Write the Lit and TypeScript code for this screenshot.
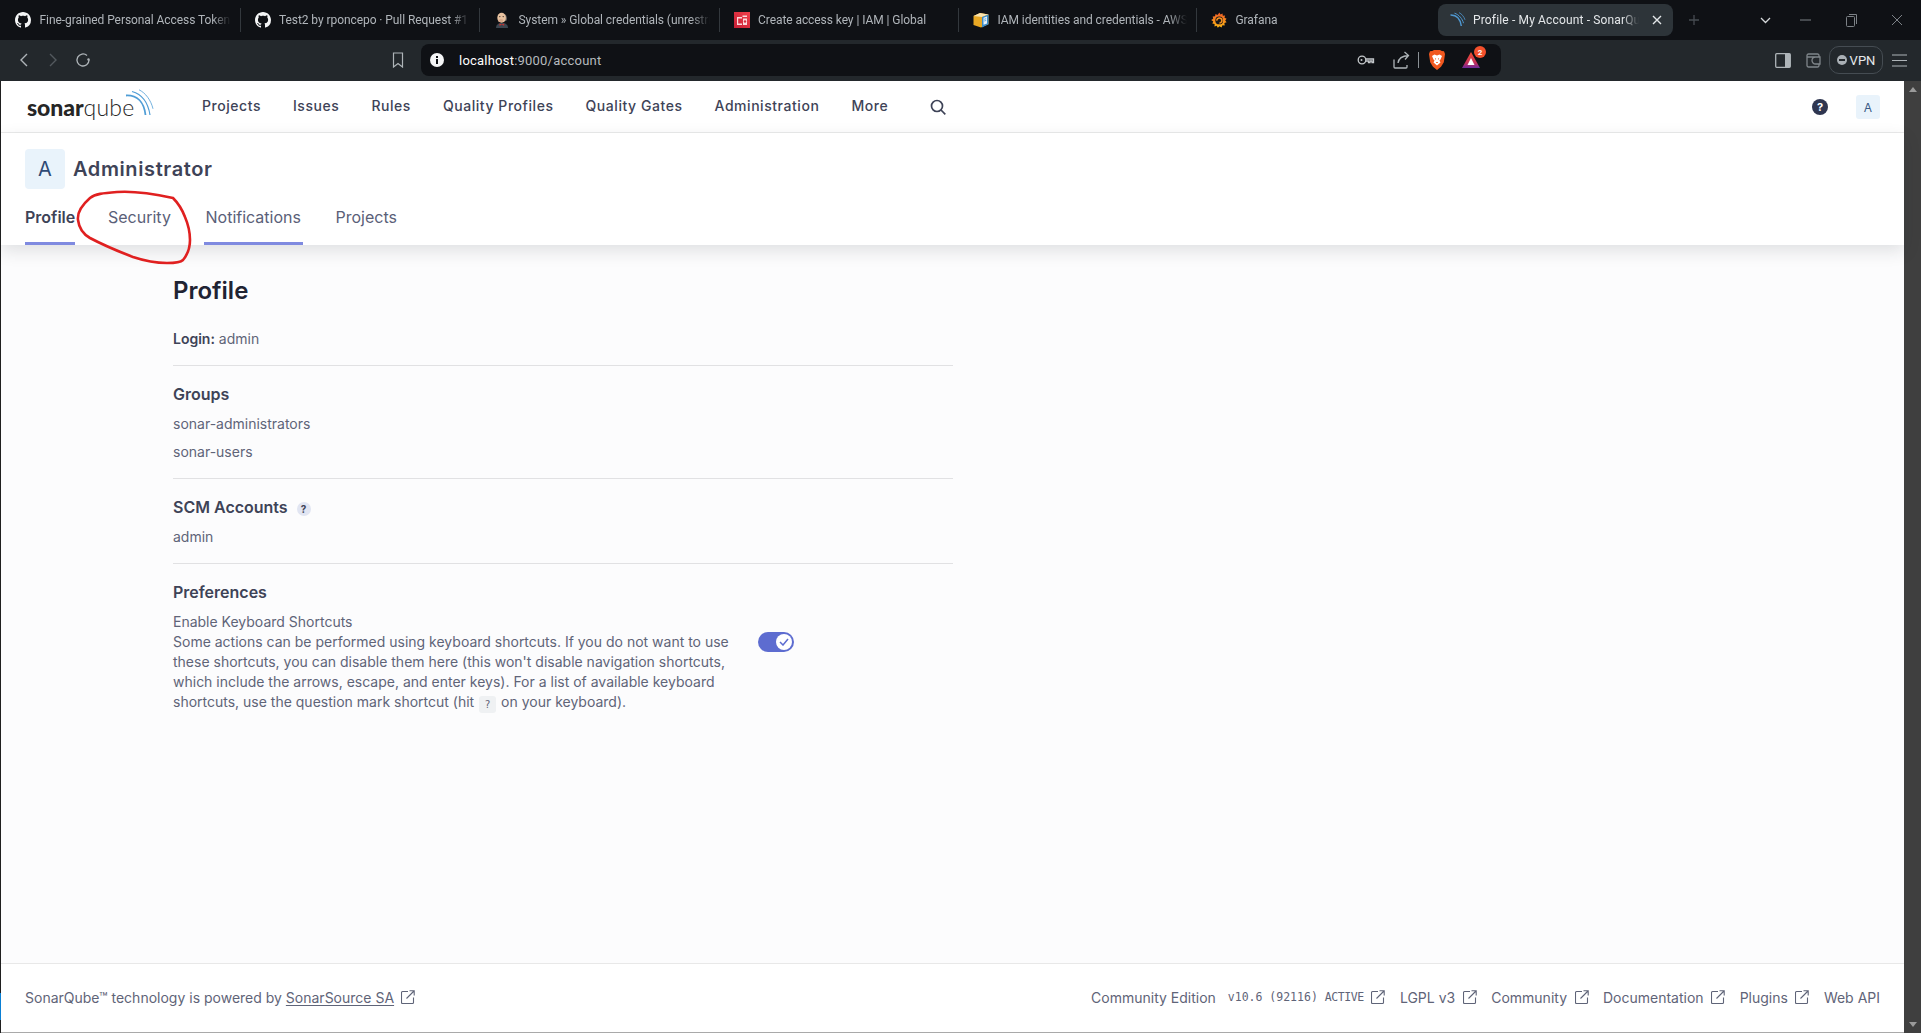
import { LitElement, html, css } from "lit";
import { customElement } from "lit/decorators.js";

const GH = "M8 0C3.58 0 0 3.58 0 8c0 3.54 2.29 6.53 5.47 7.59.4.07.55-.17.55-.38 0-.19-.01-.82-.01-1.49-2.01.37-2.53-.49-2.69-.94-.09-.23-.48-.94-.82-1.13-.28-.15-.68-.52-.01-.53.63-.01 1.08.58 1.23.82.72 1.21 1.87.87 2.33.66.07-.52.28-.87.51-1.07-1.78-.2-3.64-.89-3.64-3.95 0-.87.31-1.59.82-2.15-.08-.2-.36-1.02.08-2.12 0 0 .67-.21 2.2.82.64-.18 1.32-.27 2-.27s1.36.09 2 .27c1.53-1.04 2.2-.82 2.2-.82.44 1.1.16 1.92.08 2.12.51.56.82 1.27.82 2.15 0 3.07-1.87 3.75-3.65 3.95.29.25.54.73.54 1.48 0 1.07-.01 1.93-.01 2.2 0 .21.15.46.55.38A8.01 8.01 0 0 0 16 8c0-4.42-3.58-8-8-8z";

const github = html`<svg class="fav" viewBox="0 0 16 16"><path fill="#f4f5f6" d=${GH}></path></svg>`;
const jenkins = html`<svg class="fav" viewBox="0 0 16 16">
  <path d="M2 16c0-3 2-5 6-5s6 2 6 5z" fill="#3c4650"></path>
  <path d="M10.800 2.200c2 1 2.600 4 1.800 6.400l-1.800.6z" fill="#6f6a66"></path>
  <ellipse cx="7.600" cy="5.700" rx="4.300" ry="5" fill="#e9c3a0"></ellipse>
  <ellipse cx="6.800" cy="8.400" rx="2.600" ry="1.500" fill="#d9a98a"></ellipse>
  <circle cx="5.800" cy="4.600" r=".7" fill="#3a2f2a"></circle>
  <circle cx="9.200" cy="4.600" r=".7" fill="#3a2f2a"></circle>
  <path d="M5.400 11.400l2.400 1 2.400-1v2.400l-2.400-1-2.400 1z" fill="#c8322e"></path>
</svg>`;
const awsRed = html`<svg class="fav" viewBox="0 0 16 16">
  <defs><linearGradient id="ar" x1="0" y1="1" x2="1" y2="0"><stop offset="0" stop-color="#c51f35"></stop><stop offset="1" stop-color="#f2404b"></stop></linearGradient></defs>
  <rect width="16" height="16" fill="url(#ar)"></rect>
  <path d="M3 5h5v1.500H4.200v5H8V13H3zM8.500 3.500H13V5H8.500zM9 6.500h4V13H9z" fill="#fbd9dc"></path>
  <circle cx="11" cy="9.500" r="1.200" fill="#d42d3e"></circle>
</svg>`;
const iam = html`<svg class="fav" viewBox="0 0 16 16">
  <path d="M.5 4L7 1l8.500 1.500v9.700L8 15.500.5 13z" fill="#e8a824"></path>
  <path d="M.5 4L7 1l8.500 1.500L9 5z" fill="#f9e3ae"></path>
  <path d="M9 5l6.500-2.500v9.700L9 15.500z" fill="#3a8ccb"></path>
  <path d="M10.500 5.800l3.500-1.200v6.800l-3.500 1.300z" fill="#e9f3fa"></path>
  <path d="M11.200 7.300l2-.6M11.200 9l2-.6" stroke="#3a8ccb" stroke-width=".7"></path>
</svg>`;
const grafana = html`<svg class="fav" viewBox="0 0 16 16">
  <defs><linearGradient id="gf" x1="0" y1="1" x2="0" y2="0"><stop offset="0" stop-color="#fcb714"></stop><stop offset="1" stop-color="#f05a28"></stop></linearGradient></defs>
  <path fill="url(#gf)" d="M8.400.4l1.100 2 2-1 .3 2.300 2.300-.1-.6 2.200 2.100.9-1.400 1.800 1.400 1.800-2.200.8.3 2.300-2.300-.2-.9 2.200-2-1.200-1.700 1.600-1.100-2-2.200.6.1-2.300-2.300-.5 1-2.100L.2 7.900l2-1.200-.5-2.300 2.300-.1.500-2.300 2 1.100z"></path>
  <circle cx="8.200" cy="8.400" r="3.900" fill="#15171b"></circle>
  <path d="M5.900 8.600a2.500 2.500 0 1 1 2.500 2.400" fill="none" stroke="#f8921e" stroke-width="1.600"></path>
</svg>`;
const sonarFav = html`<svg class="fav" viewBox="0 0 16 16" fill="none" stroke="#4f97cf">
  <path d="M.5 3c6-.2 9.800 4.200 10.800 11" stroke-width="1.500"></path>
  <path d="M4.500 1.200c4.500 1.300 8 5.800 9 10" stroke-width="1"></path>
  <path d="M9 .6c2.800 1.400 5 4 6 7.200" stroke-width=".8"></path>
</svg>`;

const ext = html`<svg class="ext" viewBox="0 0 14 14" fill="none" stroke="currentColor" stroke-width="1.100">
  <path d="M7 1.500H1.500a1 1 0 0 0-1 1v10a1 1 0 0 0 1 1h10a1 1 0 0 0 1-1V7.500"></path>
  <path d="M5.500 8.500L13 1M8.500.8H13.200V5.500"></path>
</svg>`;

const TABS = [
  { icon: github, label: "Fine-grained Personal Access Tokens", cls: "" },
  { icon: github, label: "Test2 by rponcepo · Pull Request #1", cls: "" },
  { icon: jenkins, label: "System » Global credentials (unrestricted)", cls: "" },
  { icon: awsRed, label: "Create access key | IAM | Global", cls: "" },
  { icon: iam, label: "IAM identities and credentials - AWS", cls: "narrow" },
  { icon: grafana, label: "Grafana", cls: "last" },
];

const NAV = ["Projects", "Issues", "Rules", "Quality Profiles", "Quality Gates", "Administration", "More"];

@customElement("app-root")
export class AppRoot extends LitElement {
  static styles = css`
    :host { display: flex; flex-direction: column; width: 1921px; height: 1033px; overflow: hidden; font-family: Inter, "Liberation Sans", sans-serif; color: #3e4357; position: relative; background: #fff; }
    * { box-sizing: border-box; }
    svg { display: block; flex: none; }

    /* tab strip */
    .tabstrip { height: 40px; background: #0f1115; display: flex; align-items: center; padding-left: 1px; font-family: Roboto, sans-serif; font-size: 12px; letter-spacing: -.07px; color: #b0b5ba; flex: none; }
    .tab { width: 239.5px; height: 24px; display: flex; align-items: center; padding-left: 14px; gap: 8.500px; border-right: 1px solid #33383d; flex: none; }
    .tab.narrow { width: 238px; }
    .tab.last { border-right: none; width: 241px; }
    .tab span { flex: 1; white-space: nowrap; overflow: hidden; margin-right: 9px; -webkit-mask-image: linear-gradient(90deg, #000 90%, transparent); mask-image: linear-gradient(90deg, #000 90%, transparent); }
    .fav { width: 16px; height: 16px; }
    .active { width: 235px; height: 32px; border-radius: 8px; background: #2d3439; display: flex; align-items: center; padding-left: 12px; gap: 7px; letter-spacing: .15px; color: #e4e7e9; flex: none; }
    .active span { flex: 1; white-space: nowrap; overflow: hidden; margin-right: 5px; -webkit-mask-image: linear-gradient(90deg, #000 90%, transparent); mask-image: linear-gradient(90deg, #000 90%, transparent); }
    .active .x { width: 12px; height: 12px; margin-right: 10px; }
    .plus { width: 42px; display: flex; justify-content: center; }
    .winctl { margin-left: auto; display: flex; padding-right: 1px; }
    .winbtn { width: 46px; height: 32px; display: flex; align-items: center; justify-content: center; }
    .winbtn.chev { width: 34px; }

    /* toolbar */
    .toolbar { height: 41px; background: #23282c; display: flex; align-items: center; padding: 0 0 1px 8px; flex: none; }
    .slot { width: 30px; height: 30px; display: flex; align-items: center; justify-content: center; flex: none; }
    .bookmark { margin-left: 285px; }
    .address { width: 1080px; height: 32px; margin-left: 8px; border-radius: 8px; background: #0f1115; display: flex; align-items: center; padding-left: 8px; font-family: Roboto, sans-serif; font-size: 13px; letter-spacing: .22px; color: #b6babe; flex: none; }
    .address .url { margin-left: 14px; }
    .address b { font-weight: 400; color: #fff; }
    .addr-right { margin-left: auto; display: flex; align-items: center; padding-right: 15px; }
    .addr-sep { width: 1px; height: 16px; background: #8b9196; margin: 0 3px 0 2px; }
    .share { margin-left: 5px; }
    .rewards { margin-left: 4px; position: relative; }
    .badge { position: absolute; right: 0; top: 1px; width: 12px; height: 12px; border-radius: 50%; background: #f4502c; color: #fff; font-size: 8px; font-weight: 700; letter-spacing: 0; display: flex; align-items: center; justify-content: center; }
    .tool-right { margin-left: 267px; display: flex; align-items: center; }
    .vpn { width: 54px; height: 28px; margin-left: 1px; border: 1px solid #454c52; border-radius: 10px; display: flex; align-items: center; justify-content: center; gap: 3px; font-family: Roboto, sans-serif; font-size: 13px; color: #e6e8ea; }
    .vpn i { width: 10px; height: 10px; border-radius: 50%; background: #aab0b5; display: flex; align-items: center; justify-content: center; }
    .vpn i::after { content: ""; width: 6px; height: 2px; background: #23282c; }
    .burger { width: 32px; display: flex; justify-content: center; }

    /* page */
    .page { flex: 1; display: flex; min-height: 0; }
    .edge { width: 1px; background: linear-gradient(#1f1f1f 0, #1f1f1f 912px, #0a7fd4 912px, #0a7fd4 939px, #1f1f1f 939px); flex: none; }
    .main { flex: 1; min-width: 0; display: flex; flex-direction: column; background: #fcfcfd; }
    .scroll { width: 17px; background: #3f3f3f; flex: none; display: flex; flex-direction: column; justify-content: space-between; align-items: center; padding: 6px 0; }
    .tri-up { width: 0; height: 0; border: 4px solid transparent; border-top: 0; border-bottom: 5px solid #9a9a9a; }
    .tri-down { width: 0; height: 0; border: 4px solid transparent; border-bottom: 0; border-top: 5px solid #9a9a9a; }

    nav { height: 52px; background: #fff; border-bottom: 1px solid #ebebeb; display: flex; align-items: center; padding: 0 24px 3px 26px; flex: none; }
    .logo { width: 175px; position: relative; height: 50px; margin-top: 1px; display: flex; align-items: flex-end; padding-bottom: 12px; font-family: Lato, sans-serif; font-size: 23px; line-height: 24px; color: #262626; }
    .logo b { font-weight: 900; letter-spacing: -.1px; }
    .logo span { font-weight: 300; letter-spacing: .3px; }
    .logo svg { position: absolute; left: 98px; top: 8px; }
    .navlinks { display: flex; gap: 32px; font-size: 14px; font-weight: 500; letter-spacing: .55px; color: #3e4357; }
    .search { margin: 4px 0 0 42px; }
    .navright { margin: 4px 0 0 auto; display: flex; align-items: center; gap: 28px; }
    .mini { width: 24px; height: 24px; border-radius: 3px; background: #e9f3fb; color: #3a5a86; font-size: 12px; display: flex; align-items: center; justify-content: center; }

    header { height: 112px; background: #fff; box-shadow: 0 6px 16px rgba(30, 35, 50, .13); padding: 16px 0 0 24px; flex: none; position: relative; }
    .who { display: flex; align-items: center; gap: 9px; }
    .big { width: 40px; height: 40px; border-radius: 4px; background: #e9f3fb; color: #2f4a75; font-size: 20px; display: flex; align-items: center; justify-content: center; }
    .who h2 { margin: 0 0 0 -1px; font-size: 20px; line-height: 28px; font-weight: 600; letter-spacing: .6px; color: #3e4357; }
    .tabs { display: flex; height: 56px; }
    .pt { font-size: 16px; line-height: 56px; height: 56px; color: #5a6078; border-bottom: 3px solid transparent; flex: none; }
    .pt.on { font-weight: 600; color: #3e4357; width: 50px; margin-right: 33px; border-color: #7f8ae0; }
    .pt.sec { width: 62px; margin-right: 34px; }
    .pt.not { width: 99px; padding-left: 1.500px; margin-right: 32.500px; border-color: #7f8ae0; }

    .content { flex: 1; min-height: 0; padding: 31px 0 0 172px; }
    .col { width: 780px; font-size: 14px; line-height: 20px; color: #5f6478; }
    h1 { margin: 0 0 23px; font-size: 24px; line-height: 30px; font-weight: 600; color: #1f2333; }
    h3 { margin: 0 0 8px; font-size: 16px; line-height: 24px; font-weight: 600; color: #3e4357; display: flex; align-items: center; }
    .login strong { font-weight: 600; color: #3e4357; }
    .divider { height: 1px; background: #e1e1e3; margin: 16px 0; }
    .stack { display: flex; flex-direction: column; gap: 8px; }
    .q { width: 14px; height: 14px; margin-left: 9px; margin-top: 4px; border-radius: 50%; background: #e1e5f2; color: #3e4357; font-size: 10px; font-weight: 700; display: flex; align-items: center; justify-content: center; }
    .pref { display: flex; gap: 25px; }
    .pref p { margin: 0; width: 560px; }
    kbd { display: inline-block; width: 17px; height: 17px; margin: 0 1px; border-radius: 3px; background: #eff1f3; font-family: "DejaVu Sans Mono", monospace; font-size: 10px; line-height: 17px; text-align: center; color: #5f6478; vertical-align: -1px; }
    .toggle { width: 36px; height: 20px; margin-top: 20px; border-radius: 10px; background: #5d6cd0; display: flex; justify-content: flex-end; align-items: center; padding-right: 2px; flex: none; }
    .knob { width: 16px; height: 16px; border-radius: 50%; background: #fff; display: flex; align-items: center; justify-content: center; }

    footer { height: 70px; background: #fff; border-top: 1px solid #e8e8e8; border-bottom: 1px solid #a9a9a9; display: flex; align-items: center; justify-content: space-between; padding: 0 24px 2px 24px; font-size: 14px; color: #5f6478; flex: none; }
    footer u { text-underline-offset: 2px; }
    .ext { width: 14px; height: 14px; color: #5f6478; }
    .fl { display: flex; align-items: center; gap: 7px; }
    .fr { display: flex; align-items: center; }
    .ver { font-family: "DejaVu Sans Mono", monospace; font-size: 11.500px; margin-left: 12px; }
    .ver em { font-style: normal; letter-spacing: -.4px; }
    .fr .ext { margin: 0 14.500px 0 7.500px; }

    .ink { position: absolute; left: 0; top: 0; pointer-events: none; }
  `;

  render() {
    return html`
      <div class="tabstrip">
        ${TABS.map((t) => html`<div class="tab ${t.cls}">${t.icon}<span>${t.label}</span></div>`)}
        <div class="active">
          ${sonarFav}<span>Profile - My Account - SonarQube</span>
          <svg class="x" viewBox="0 0 12 12" stroke="#e4e7e9" stroke-width="1.400"><path d="M2 2l8 8M10 2l-8 8"></path></svg>
        </div>
        <div class="plus"><svg width="12" height="12" viewBox="0 0 12 12" stroke="#474c52" stroke-width="1.300"><path d="M6 1v10M1 6h10"></path></svg></div>
        <div class="winctl">
          <div class="winbtn chev"><svg width="11" height="7" viewBox="0 0 11 7" fill="none" stroke="#d5d8da" stroke-width="1.300"><path d="M1 1l4.500 4.500L10 1"></path></svg></div>
          <div class="winbtn"><svg width="11" height="2" viewBox="0 0 11 2" stroke="#7d8287"><path d="M0 1h11"></path></svg></div>
          <div class="winbtn"><svg width="11" height="13" viewBox="0 0 11 13" fill="none" stroke="#7d8287"><rect x=".5" y="2.500" width="8" height="10" rx="1"></rect><path d="M3 .5h7.500V10"></path></svg></div>
          <div class="winbtn"><svg width="12" height="12" viewBox="0 0 12 12" stroke="#7d8287"><path d="M1 1l10 10M11 1L1 11"></path></svg></div>
        </div>
      </div>

      <div class="toolbar">
        <div class="slot"><svg width="9" height="14" viewBox="0 0 9 14" fill="none" stroke="#aeb4b8" stroke-width="1.400"><path d="M8 1L2 7l6 6"></path></svg></div>
        <div class="slot"><svg width="9" height="14" viewBox="0 0 9 14" fill="none" stroke="#53595e" stroke-width="1.400"><path d="M1 1l6 6-6 6"></path></svg></div>
        <div class="slot"><svg width="16" height="16" viewBox="0 0 16 16" fill="none" stroke="#aeb4b8" stroke-width="1.300"><path d="M14 8a6 6 0 1 1-2-4.500"></path><circle cx="13.500" cy="7.500" r="1.200" fill="#aeb4b8" stroke="none"></circle></svg></div>
        <div class="slot bookmark"><svg width="12" height="16" viewBox="0 0 12 16" fill="none" stroke="#aeb4b8" stroke-width="1.200"><path d="M1.500 1h9v14L6 11.500 1.500 15z"></path></svg></div>
        <div class="address">
          <svg width="16" height="16" viewBox="0 0 16 16"><circle cx="8" cy="8" r="7" fill="#f4f5f6"></circle><rect x="7" y="7" width="2" height="5" fill="#0f1115"></rect><rect x="7" y="4" width="2" height="2" fill="#0f1115"></rect></svg>
          <span class="url"><b>localhost</b>:9000/account</span>
          <div class="addr-right">
            <div class="slot"><svg width="18" height="12" viewBox="0 0 18 12" fill="none" stroke="#c4c8cb" stroke-width="1.300"><circle cx="5" cy="6" r="3.800"></circle><circle cx="4.500" cy="6" r="1" fill="#c4c8cb" stroke="none"></circle><path d="M9 5h7.500v3.500h-1.500V7h-2v1.500h-1.500V7H9"></path></svg></div>
            <div class="slot share"><svg width="17" height="18" viewBox="0 0 17 18" fill="none" stroke="#aeb4b8" stroke-width="1.300"><path d="M1 8.500V16a1 1 0 0 0 1 1h11a1 1 0 0 0 1-1v-2"></path><path d="M5 12c.500-4 3-7 10.500-7.500M11.500 1l4 3.500-3.500 4"></path></svg></div>
            <div class="addr-sep"></div>
            <div class="slot"><svg width="16" height="20" viewBox="0 0 16 20"><path d="M3.200 1L5 0h6l1.800 1 2.200.3L16 4l-1.200 8.200L12 16.800 8 20l-4-3.200-2.800-4.600L0 4l1-2.700z" fill="#f1581f"></path><path d="M3 6l2.500-1.500L8 5.500l2.500-1L13 6l-1.500 3.500-1 1 1 2L8 15.500 4.500 12.500l1-2-1-1z" fill="#fff"></path><path d="M6 8.500l1 .8M10 8.500l-1 .8M7.200 12.500h1.600" stroke="#f1581f" stroke-width="1"></path></svg></div>
            <div class="slot rewards">
              <svg width="18" height="16" viewBox="0 0 18 16"><defs><linearGradient id="rw" x1="0" y1="0" x2="0" y2="1"><stop offset="0" stop-color="#f4502c"></stop><stop offset=".7" stop-color="#c22f5e"></stop><stop offset="1" stop-color="#6a2a9c"></stop></linearGradient></defs><path d="M9 0l9 16H0z" fill="url(#rw)"></path><path d="M9 6l3.500 7h-7z" fill="#fff"></path></svg>
              <div class="badge">2</div>
            </div>
          </div>
        </div>
        <div class="tool-right">
          <div class="slot"><svg width="16" height="15" viewBox="0 0 16 15" fill="none" stroke="#aeb4b8" stroke-width="1.300"><rect x=".7" y=".7" width="14.600" height="13.600" rx="1"></rect><rect x="10" y="1" width="5" height="13" fill="#aeb4b8" stroke="none"></rect></svg></div>
          <div class="slot"><svg width="15" height="15" viewBox="0 0 15 15" fill="none" stroke="#7f858a" stroke-width="1.300"><path d="M13 4V2.500a1.500 1.500 0 0 0-1.500-1.500h-9A1.500 1.500 0 0 0 1 2.500v10A1.500 1.500 0 0 0 2.500 14h9a1.500 1.500 0 0 0 1.500-1.500V11"></path><path d="M1 4h13v7H9.500a1.500 1.500 0 0 1 0-7"></path></svg></div>
          <div class="vpn"><i></i>VPN</div>
          <div class="burger"><svg width="15" height="13" viewBox="0 0 15 13" stroke="#aeb4b8" stroke-width="1.200"><path d="M0 1h15M0 6.500h15M0 12h15"></path></svg></div>
        </div>
      </div>

      <div class="page">
        <div class="edge"></div>
        <div class="main">
          <nav>
            <div class="logo"><b>sonar</b><span>qube</span>
              <svg width="30" height="28" viewBox="0 0 30 28" fill="none" stroke="#4f9dd6">
                <path d="M1 6.500C12 6 19 13 20.500 26" stroke-width="1.800"></path>
                <path d="M7 2.500C16 5 23 13 25 26" stroke-width="1.200"></path>
                <path d="M14 .8c6.500 3 12 10.500 14 19" stroke-width=".8"></path>
              </svg>
            </div>
            <div class="navlinks">${NAV.map((n) => html`<span>${n}</span>`)}</div>
            <svg class="search" width="16" height="16" viewBox="0 0 16 16" fill="none" stroke="#3e4357" stroke-width="1.700"><circle cx="7" cy="7" r="5.500"></circle><path d="M11 11l4.300 4.300"></path></svg>
            <div class="navright">
              <svg width="16" height="16" viewBox="0 0 16 16"><circle cx="8" cy="8" r="8" fill="#2f3650"></circle><text x="8" y="12" text-anchor="middle" font-size="11" font-weight="700" fill="#fff" font-family="Inter, sans-serif">?</text></svg>
              <div class="mini">A</div>
            </div>
          </nav>
          <header>
            <div class="who"><div class="big">A</div><h2>Administrator</h2></div>
            <div class="tabs">
              <div class="pt on">Profile</div>
              <div class="pt sec">Security</div>
              <div class="pt not">Notifications</div>
              <div class="pt">Projects</div>
            </div>
          </header>
          <div class="content">
            <div class="col">
              <h1>Profile</h1>
              <div class="login"><strong>Login:</strong> admin</div>
              <div class="divider"></div>
              <h3>Groups</h3>
              <div class="stack"><div>sonar-administrators</div><div>sonar-users</div></div>
              <div class="divider"></div>
              <h3>SCM Accounts<span class="q">?</span></h3>
              <div>admin</div>
              <div class="divider"></div>
              <h3>Preferences</h3>
              <div class="pref">
                <p>Enable Keyboard Shortcuts<br />Some actions can be performed using keyboard shortcuts. If you do not want to use these shortcuts, you can disable them here (this won't disable navigation shortcuts, which include the arrows, escape, and enter keys). For a list of available keyboard shortcuts, use the question mark shortcut (hit <kbd>?</kbd> on your keyboard).</p>
                <div class="toggle"><div class="knob"><svg width="10" height="8" viewBox="0 0 10 8" fill="none" stroke="#5d6cd0" stroke-width="1.500"><path d="M1 4l3 3 5-6"></path></svg></div></div>
              </div>
            </div>
          </div>
          <footer>
            <div class="fl"><span>SonarQube™ technology is powered by <u>SonarSource SA</u></span>${ext}</div>
            <div class="fr">
              <span>Community Edition</span><span class="ver">v10.6 (92116) <em>ACTIVE</em></span>${ext}
              <span>LGPL v3</span>${ext}
              <span>Community</span>${ext}
              <span>Documentation</span>${ext}
              <span>Plugins</span>${ext}
              <span>Web API</span>
            </div>
          </footer>
        </div>
        <div class="scroll"><div class="tri-up"></div><div class="tri-down"></div></div>
      </div>

      <svg class="ink" width="260" height="280" viewBox="0 0 260 280" fill="none" stroke="#e02020" stroke-width="2.600" stroke-linecap="round">
        <path d="M173 198C150 193 130 191 117 192C103 193 95 194 90 198C82 205 77 212 78 220C79 228 83 234 90 238C105 246 120 252 133 257C145 261 157 263 167 263C175 263 181 262 183 260C188 254 190 247 190 240C190 232 188 224 185 217C182 209 178 203 173 198Z"></path>
      </svg>
    `;
  }
}
